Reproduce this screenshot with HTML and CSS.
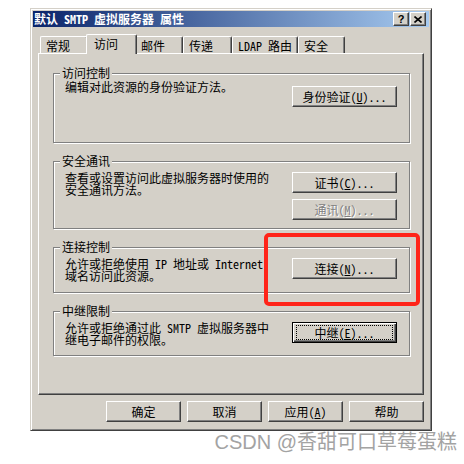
FILE: index.html
```html
<!DOCTYPE html>
<html lang="zh-CN">
<head>
    <meta charset="UTF-8">
    <meta name="viewport" content="width=device-width, initial-scale=1.0">
    <title>默认 SMTP 虚拟服务器 属性</title>
    <link rel="stylesheet" href="styles.css">
</head>
<body>
    <div class="dialog">
        <div class="titlebar">
            <div class="title">默认 SMTP 虚拟服务器 属性</div>
            <div class="caption-buttons">
                <div class="caption-btn help">?</div>
                <div class="caption-btn">
                    <svg width="8" height="7" viewBox="0 0 8 7"><path d="M0.5 0.5 L7.5 6.5 M7.5 0.5 L0.5 6.5" stroke="#000" stroke-width="1.6" fill="none"/></svg>
                </div>
            </div>
        </div>
        <div class="dialog-body">
            <div class="tabs">
                <div class="tab tab-general">常规</div>
                <div class="tab tab-access active">访问</div>
                <div class="tab tab-mail">邮件</div>
                <div class="tab tab-delivery">传递</div>
                <div class="tab tab-ldap">LDAP 路由</div>
                <div class="tab tab-security">安全</div>
            </div>
            <div class="tab-panel">
                <fieldset class="group group-auth">
                    <legend>访问控制</legend>
                    <div class="group-body">
                        <div class="group-text">
                            <div class="text-line">编辑对此资源的身份验证方法。</div>
                        </div>
                        <div class="group-buttons">
                            <button class="btn btn-wide">身份验证(<u>U</u>)...</button>
                        </div>
                    </div>
                </fieldset>
                <fieldset class="group group-secure">
                    <legend>安全通讯</legend>
                    <div class="group-body">
                        <div class="group-text">
                            <div class="text-line">查看或设置访问此虚拟服务器时使用的</div>
                            <div class="text-line">安全通讯方法。</div>
                        </div>
                        <div class="group-buttons">
                            <button class="btn btn-wide">证书(<u>C</u>)...</button>
                            <button class="btn btn-wide" disabled>通讯(<u>M</u>)...</button>
                        </div>
                    </div>
                </fieldset>
                <fieldset class="group group-connect">
                    <legend>连接控制</legend>
                    <div class="group-body">
                        <div class="group-text">
                            <div class="text-line">允许或拒绝使用 IP 地址或 Internet</div>
                            <div class="text-line">域名访问此资源。</div>
                        </div>
                        <div class="group-buttons">
                            <button class="btn btn-wide">连接(<u>N</u>)...</button>
                        </div>
                    </div>
                </fieldset>
                <fieldset class="group group-relay">
                    <legend>中继限制</legend>
                    <div class="group-body">
                        <div class="group-text">
                            <div class="text-line">允许或拒绝通过此 SMTP 虚拟服务器中</div>
                            <div class="text-line">继电子邮件的权限。</div>
                        </div>
                        <div class="group-buttons">
                            <button class="btn btn-wide btn-default"><span class="focus-ring">中继(<u>E</u>)...</span></button>
                        </div>
                    </div>
                </fieldset>
            </div>
            <div class="footer">
                <button class="btn">确定</button>
                <button class="btn">取消</button>
                <button class="btn">应用(<u>A</u>)</button>
                <button class="btn">帮助</button>
            </div>
        </div>
        <div class="highlight"></div>
    </div>
    <div class="watermark">CSDN @香甜可口草莓蛋糕</div>
</body>
</html>
```
FILE: styles.css
```css
body {
    margin: 0;
    background-color: #fff;
    font-family: "Noto Sans Mono CJK SC", "Noto Sans CJK SC", sans-serif;
    font-size: 12px;
    color: #000;
}
.dialog {
    position: relative;
    width: 402px;
    height: 423px;
    box-sizing: border-box;
    margin: 8px 0 0 30px;
    padding: 2px;
    background-color: #d4d0c8;
    border: 1px solid;
    border-color: #d4d0c8 #404040 #404040 #d4d0c8;
    box-shadow: inset 1px 1px #fff, inset -1px -1px #808080;
}
.titlebar {
    display: flex;
    align-items: center;
    justify-content: space-between;
    height: 16px;
    padding-left: 1px;
    background: linear-gradient(to right, #0a246a, #a6caf0);
    color: #fff;
    font-weight: bold;
}
.title {
    line-height: 16px;
}
.caption-buttons {
    display: flex;
    gap: 1px;
    margin-right: 3px;
}
.caption-btn {
    display: flex;
    align-items: center;
    justify-content: center;
    width: 16px;
    height: 14px;
    box-sizing: border-box;
    background-color: #d4d0c8;
    border: 1px solid;
    border-color: #fff #404040 #404040 #fff;
    box-shadow: inset -1px -1px #808080;
    color: #000;
}
.caption-btn.help {
    font-family: "Liberation Sans", sans-serif;
    font-size: 11px;
    line-height: 12px;
}
.dialog-body {
    padding: 7px 5px 0;
}
.tabs {
    display: flex;
    align-items: flex-end;
    height: 19px;
    padding-left: 2px;
}
.tab {
    height: 17px;
    box-sizing: border-box;
    padding: 2px 0 0 5px;
    line-height: 14px;
    border: 1px solid;
    border-color: #fff #404040 transparent #fff;
    border-bottom: none;
    border-radius: 2px 2px 0 0;
    box-shadow: inset -1px 0 #808080;
    white-space: nowrap;
}
.tab-general { width: 48px; }
.tab-access { width: 47px; }
.tab-mail { width: 48px; }
.tab-delivery { width: 49px; }
.tab-ldap { width: 66px; }
.tab-security { width: 47px; }
.tab.active {
    position: relative;
    z-index: 1;
    width: 51px;
    height: 20px;
    margin: 0 -2px -1px;
    padding-left: 7px;
    background-color: #d4d0c8;
}
.tab-panel {
    display: flex;
    flex-direction: column;
    gap: 11px;
    height: 342px;
    box-sizing: border-box;
    padding: 12px 13px 0 14px;
    border: 1px solid;
    border-color: #fff #404040 #404040 #fff;
    box-shadow: inset -1px -1px #808080;
}
.group {
    margin: 0;
    min-width: 0;
    box-sizing: border-box;
    padding: 0 12px 0 11px;
    border: 1px solid #808080;
    box-shadow: inset 1px 1px #fff, 1px 1px #fff;
}
.group legend {
    margin-left: -5px;
    padding: 0 2px;
    line-height: 14px;
    background-color: #d4d0c8;
}
.group-auth { height: 77px; }
.group-secure { height: 75px; }
.group-connect { height: 53px; }
.group-relay { height: 52px; }
.group-body {
    display: flex;
    justify-content: space-between;
    align-items: flex-start;
    padding-top: 4px;
}
.group-text {
    white-space: nowrap;
}
.text-line {
    height: 12px;
    line-height: 12px;
}
.group-auth .group-text {
    margin-top: -3px;
}
.group-auth .group-buttons {
    margin-top: 2px;
}
.group-buttons {
    display: flex;
    flex-direction: column;
    gap: 6px;
}
.btn {
    width: 75px;
    height: 21px;
    box-sizing: border-box;
    padding: 0;
    font: inherit;
    line-height: 17px;
    color: #000;
    text-align: center;
    background-color: #d4d0c8;
    border: 1px solid;
    border-color: #fff #404040 #404040 #fff;
    box-shadow: inset -1px -1px #808080;
}
.btn-wide {
    width: 105px;
}
.btn:disabled {
    color: #808080;
    text-shadow: 1px 1px #fff;
}
.btn-default {
    padding: 2px 3px;
    border-color: #000;
    box-shadow: inset 1px 1px #fff, inset -1px -1px #404040, inset -2px -2px #808080;
}
.focus-ring {
    display: block;
    height: 100%;
    box-sizing: border-box;
    border: 1px dotted #000;
    line-height: 13px;
}
.footer {
    display: flex;
    justify-content: flex-end;
    gap: 6px;
    margin-top: 6px;
}
.highlight {
    position: absolute;
    left: 233px;
    top: 224px;
    width: 156px;
    height: 73px;
    box-sizing: border-box;
    border: 4px solid #ff2419;
    border-radius: 5px;
}
.watermark {
    padding-right: 7px;
    text-align: right;
    font-family: "Liberation Sans", "Noto Sans CJK SC", sans-serif;
    font-size: 20px;
    line-height: 23px;
    color: #a3a3a3;
}
```
